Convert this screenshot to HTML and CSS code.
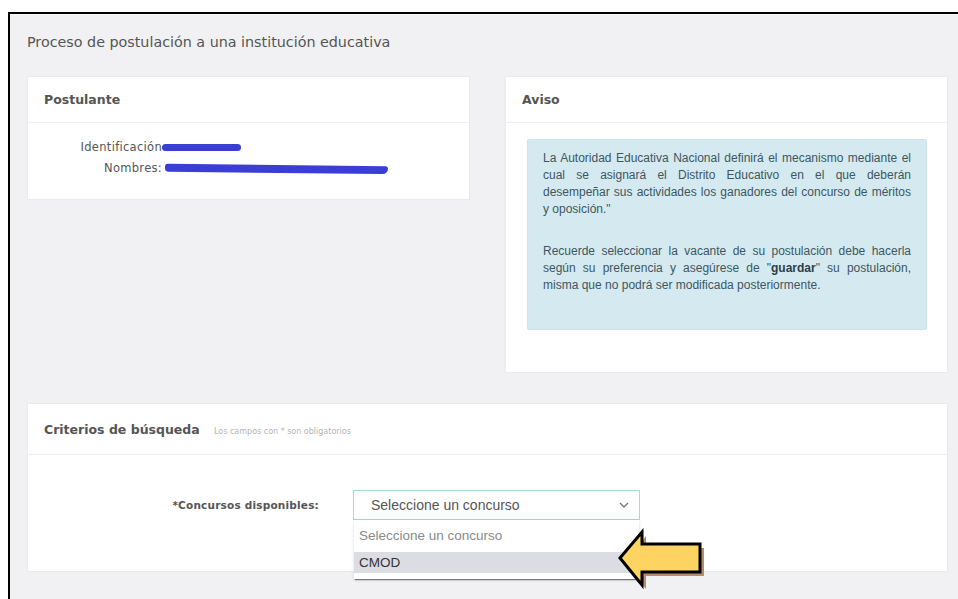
FILE: index.html
```html
<!DOCTYPE html>
<html lang="es">
<head>
<meta charset="utf-8">
<title>Proceso de postulación</title>
<link rel="stylesheet" href="styles.css">
</head>
<body>
<div class="frame">
  <h1 class="page-title">Proceso de postulación a una institución educativa</h1>

  <div class="cards">
    <section class="card">
      <header class="card-head">Postulante</header>
      <div class="card-body applicant">
        <div class="info-row">
          <span class="info-label">Identificación</span>
          <span class="redact redact-id"></span>
        </div>
        <div class="info-row">
          <span class="info-label">Nombres:</span>
          <span class="redact redact-name"></span>
        </div>
      </div>
    </section>

    <section class="card">
      <header class="card-head">Aviso</header>
      <div class="card-body notice">
        <div class="alert">
          <p>
            <span class="ln">La Autoridad Educativa Nacional definirá el mecanismo mediante el</span>
            <span class="ln">cual se asignará el Distrito Educativo en el que deberán</span>
            <span class="ln">desempeñar sus actividades los ganadores del concurso de méritos</span>
            <span class="ln">y oposición."</span>
          </p>
          <p>
            <span class="ln">Recuerde seleccionar la vacante de su postulación debe hacerla</span>
            <span class="ln">según su preferencia y asegúrese de "<b>guardar</b>" su postulación,</span>
            <span class="ln">misma que no podrá ser modificada posteriormente.</span>
          </p>
        </div>
      </div>
    </section>
  </div>

  <section class="card search">
    <header class="card-head search-head">Criterios de búsqueda <small class="hint">Los campos con * son obligatorios</small></header>
    <div class="card-body search-body">
      <div class="field">
        <label class="field-label">*Concursos disponibles:</label>
        <div class="select">
          <span class="select-value">Seleccione un concurso</span>
          <svg class="chevron" width="10" height="6" viewBox="0 0 10 6"><path d="M1 1 L5 5 L9 1" fill="none" stroke="#777" stroke-width="1.4"/></svg>
          <ul class="options">
            <li class="option placeholder">Seleccione un concurso</li>
            <li class="option active">CMOD</li>
          </ul>
        </div>
      </div>
    </div>
  </section>
</div>

<svg class="pointer" width="100" height="70" viewBox="612 526 100 70">
  <polygon points="624,562 646,536 646,548 704,548 704,576 646,576 646,589" fill="#b58d6e"/>
  <polygon points="620,558 642,532 642,544 700,544 700,572 642,572 642,585" fill="#fdd462" stroke="#000" stroke-width="3" stroke-linejoin="miter"/>
</svg>
</body>
</html>
```

FILE: styles.css
```css
html, body {
  margin: 0;
  padding: 0;
  background: #fff;
  overflow: hidden;
}

body {
  position: relative;
  height: 599px;
  font-family: "DejaVu Sans", Verdana, sans-serif;
  color: #555;
}

.frame {
  box-sizing: border-box;
  margin: 12px 0 0 8px;
  border-top: 2px solid #000;
  border-left: 2px solid #000;
  background: #f1f1f3;
  box-shadow: inset 0 1px 0 #fafafa;
  height: 587px;
  padding: 18px 10px 0 17px;
}

.page-title {
  margin: 0 0 24px;
  font-size: 14.3px;
  line-height: 20px;
  font-weight: normal;
  color: #555;
}

.cards {
  display: grid;
  grid-template-columns: 443px 443px;
  column-gap: 35px;
  align-items: start;
}

.card {
  background: #fff;
  border: 1px solid #ebebee;
  box-shadow: 0 0 1px rgba(0, 0, 0, 0.04);
}

.card-head {
  padding: 13px 16px 12px;
  line-height: 20px;
  font-size: 12.5px;
  font-weight: bold;
  color: #555;
  border-bottom: 1px solid #efeff1;
}

.applicant {
  padding: 14px 0 20px;
}

.info-row {
  display: grid;
  grid-template-columns: 134px auto;
  align-items: center;
  line-height: 21px;
}

.info-label {
  text-align: right;
  font-size: 11.5px;
  letter-spacing: 0.3px;
  color: #555;
}

.redact {
  display: block;
  height: 7px;
  background: #3a3ed4;
  border-radius: 4px;
}

.redact-id {
  width: 79px;
}

.redact-name {
  width: 223px;
  margin-left: 3px;
  height: 8px;
  border-radius: 3px 3px 6px 4px;
  transform: rotate(0.6deg);
}

.notice {
  padding: 16px 20px 42px 21px;
}

.alert {
  background: #d4eaf0;
  border: 1px solid #cbe3ea;
  border-radius: 2px;
  padding: 10px 15px 35px;
  font-family: "Liberation Sans", Arial, sans-serif;
  font-size: 12px;
  line-height: 17px;
  color: #3d5660;
  text-align: justify;
}

.alert p {
  margin: 0 0 25px;
}

.alert p:last-child {
  margin-bottom: 0;
}

/* every line but the last of a paragraph is stretched edge to edge */
.ln {
  display: block;
  text-align-last: justify;
}

.ln:last-child {
  text-align-last: left;
}

.alert b {
  color: #2b3f47;
}

.search {
  margin-top: 30px;
  width: 919px;
}

.search-head {
  padding: 16px 16px 12px;
  font-size: 12.5px;
}

.hint {
  margin-left: 10px;
  font-size: 8px;
  font-weight: normal;
  color: #b3b3b6;
}

.search-body {
  padding: 35px 0 51px;
}

.field {
  display: grid;
  grid-template-columns: 291px 287px;
  column-gap: 34px;
  align-items: center;
}

.field-label {
  text-align: right;
  font-size: 10.5px;
  font-weight: bold;
  letter-spacing: 0.2px;
  color: #555;
}

.select {
  position: relative;
  height: 28px;
  border: 1px solid #a9d9cc;
  display: flex;
  align-items: center;
  padding-left: 17px;
  font-family: "Liberation Sans", Arial, sans-serif;
  font-size: 14px;
  color: #555;
}

.select-value {
  flex: 1;
}

.chevron {
  margin-right: 10px;
}

.options {
  position: absolute;
  top: 29px;
  left: 0;
  width: 285px;
  margin: 0;
  padding: 0 0 6px;
  list-style: none;
  background: #fff;
  box-shadow: 0 2px 1px -1px #777, 0 1px 3px rgba(0, 0, 0, 0.15);
}

.option {
  padding-left: 5px;
  font-size: 13.5px;
}

.option.placeholder {
  height: 32px;
  line-height: 32px;
  color: #8a8a8a;
}

.option.active {
  height: 21px;
  line-height: 21px;
  background: #dcdce3;
  color: #333;
}

.pointer {
  position: absolute;
  left: 612px;
  top: 526px;
}
```
